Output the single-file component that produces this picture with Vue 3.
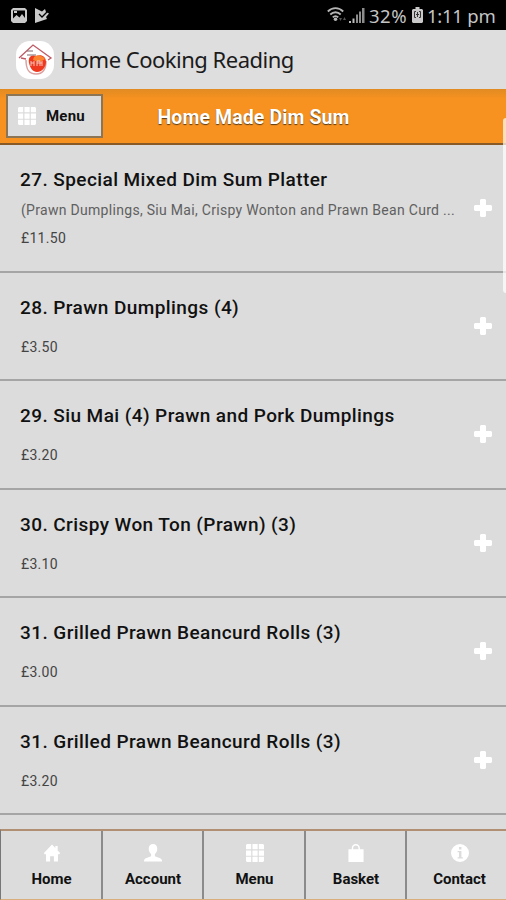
<script setup>
import { ref } from "vue";

const dishes = ref([
  {
    name: "27. Special Mixed Dim Sum Platter",
    info: "(Prawn Dumplings, Siu Mai, Crispy Wonton and Prawn Bean Curd ...",
    price: "£11.50",
  },
  { name: "28. Prawn Dumplings (4)", price: "£3.50" },
  { name: "29. Siu Mai (4) Prawn and Pork Dumplings", price: "£3.20" },
  { name: "30. Crispy Won Ton (Prawn) (3)", price: "£3.10" },
  { name: "31. Grilled Prawn Beancurd Rolls (3)", price: "£3.00" },
  { name: "31. Grilled Prawn Beancurd Rolls (3)", price: "£3.20" },
]);

const grid =
  "M1 0h4.500v5.500H0V1zM6.800 0h5.500v5.500H6.800zM13.500 0H18l1 1v4.500h-5.500zM0 6.800h5.500v5.500H0zM6.800 6.800h5.500v5.500H6.800zM13.500 6.800H19v5.500h-5.500zM0 13.500h5.500V19H1l-1-1zM6.800 13.500h5.500V19H6.800zM13.500 13.500H19V18l-1 1h-4.500z";

const tabs = [
  {
    label: "Home",
    icon: "M9.500.5 1 9.500l.7 1.300H3.200V18.500h4.300v-5.500h4v5.500h4.300v-7.700h1.500l.7-1.300-2.500-2.700V2h-2.500v2.200z",
  },
  {
    label: "Account",
    icon: "M9.500 0C6.800 0 5 2 5 5c0 2.500.9 4.300 2.500 5.500v2.500L2 15c-1.500.5-2 1.500-2 3.500h19c0-2-.5-3-2-3.500l-5.500-2v-2.500C13.100 9.300 14 7.500 14 5c0-3-1.800-5-4.500-5z",
  },
  { label: "Menu", icon: grid },
  {
    label: "Basket",
    icon: "M1.500 5.500H5V4.500C5 2 6.800 0 9.300 0s4.300 2 4.300 4.500v1h3.900V19h-16zM6.500 5.500h5.600v-1c0-1.800-1-3-2.800-3s-2.800 1.200-2.800 3z",
  },
  {
    label: "Contact",
    icon: "M9.500 0a9.500 9.500 0 1 1 0 19 9.500 9.500 0 0 1 0-19zM8.500 3.200v2.500h2.500V3.200zM7 7.500v1.200h1.500V14H7v1.300h5.500V14H11V7.500z",
  },
];
</script>

<template>
  <div class="app">
    <div class="status">
      <div class="notices">
        <svg width="16" height="15" viewBox="0 0 16 15">
          <path
            fill="#c9c9c9"
            fill-rule="evenodd"
            d="M2 0h12l2 2v11l-2 2H2l-2-2V2zM2 2.500v8L5.500 7l3 2.500L11 6l3 4V2.500z"
          />
          <path fill="#c9c9c9" d="M3 3h3v2H3z" />
        </svg>
        <svg width="15" height="15" viewBox="0 0 15 15">
          <path fill="#c9c9c9" d="M0 0l7 3.500L10 1l1 3 3 1.500-3 3.500 1 2-12 4z" />
          <path fill="none" stroke="#000" stroke-width="1.300" d="M4 6l3 3 5-5" />
        </svg>
      </div>
      <div class="system">
        <svg class="wifi" width="20" height="16" viewBox="0 0 20 16">
          <g fill="none" stroke="#b5b5b5" stroke-width="1.800">
            <path d="M.8 4.500c4.400-4.400 11-4.400 15.400 0M3.300 7.500c3-3 7.400-3 10.400 0M5.800 10.300c1.600-1.700 3.800-1.700 5.400 0" />
          </g>
          <circle cx="8.500" cy="12.300" r="1.800" fill="#b5b5b5" />
          <path fill="#555" d="M12 11h3l-1.500 3zM16 13h3l-1.500-3z" />
        </svg>
        <svg class="signal" width="16" height="15" viewBox="0 0 16 15">
          <path fill="#bcbcbc" d="M0 13h2v2H0zM3.500 10.500h2V15h-2z" />
          <path fill="#8c8c8c" d="M7 6.500h2V15H7zM10 3.500h2V15h-2zM13 0h2.500v15H13z" />
        </svg>
        <span class="percent">32%</span>
        <svg class="battery" width="11" height="16" viewBox="0 0 11 16">
          <path fill="#c9c9c9" d="M3.500 0h4v2H10l1 1v12l-1 1H1l-1-1V3l1-1h2.500z" />
          <path fill="none" stroke="#333" d="M4 4.500H2.500v6H4M7 4.500h1.500v6H7M5.500 5v5M4 7.500h3" />
        </svg>
        <span class="time">1:11 pm</span>
      </div>
    </div>

    <header class="brand">
      <svg class="logo" width="38" height="38" viewBox="0 0 38 38">
        <rect width="38" height="38" rx="14" fill="#fff" />
        <path
          d="M10 19c0 10 3 14 10 14s10-5 10-13"
          fill="none"
          stroke="#dca0a0"
          stroke-width="1.500"
        />
        <path
          d="M20 15c-5-2-8 1-7 7 1 5 4 9 8 9 5 0 9-5 9-10 0-6-5-8-10-6z"
          fill="#ef391f"
        />
        <path d="M18 16c4-3 9-1 11 2-3 3-8 3-12 1z" fill="#fa8430" />
        <path
          d="M15 20v5m0-3h3m0-2v5m3-5v5m0-5h3v5m2-5v5m-5-3h5"
          fill="none"
          stroke="#f5c6b9"
          stroke-width="1"
        />
        <path
          d="M3 17L17 4l18 13-3 2M5 17l5 1"
          fill="none"
          stroke="#bd5a65"
          stroke-width="1.300"
        />
        <path d="M11 10h6M11 14h9" stroke="#7f666b" stroke-width="1" />
      </svg>
      <h1>Home Cooking Reading</h1>
    </header>

    <div class="titlebar">
      <button class="menuBtn">
        <svg width="18" height="18" viewBox="0 0 19 19"><path fill="#fff" :d="grid" /></svg>
        <span>Menu</span>
      </button>
      <h2>Home Made Dim Sum</h2>
    </div>

    <main class="list">
      <div v-for="(dish, i) in dishes" :key="i" class="dish" :class="{ tall: dish.info }">
        <div class="text">
          <h3>{{ dish.name }}</h3>
          <p v-if="dish.info" class="info">{{ dish.info }}</p>
          <p class="price">{{ dish.price }}</p>
        </div>
        <svg class="plus" width="18" height="18" viewBox="0 0 18 18">
          <path
            fill="#fff"
            d="M7 0h4l1 1v5h5l1 1v4l-1 1h-5v5l-1 1H7l-1-1v-5H1l-1-1V7l1-1h5V1z"
          />
        </svg>
      </div>
    </main>

    <nav class="tabs">
      <div v-for="tab in tabs" :key="tab.label" class="tab">
        <svg width="18" height="18" viewBox="0 0 19 19">
          <path fill="#fff" fill-rule="evenodd" :d="tab.icon" />
        </svg>
        <span>{{ tab.label }}</span>
      </div>
    </nav>
    <div class="scrollbar"></div>
  </div>
</template>

<style>
body {
  margin: 0;
  background: #dcdcdc;
}
</style>

<style scoped>
.app {
  position: relative;
  display: flex;
  flex-direction: column;
  width: 506px;
  height: 900px;
  overflow: hidden;
  background: #dcdcdc;
  color: #111;
  font-family: Roboto, "Liberation Sans", sans-serif;
}

h1,
h2,
h3,
p {
  margin: 0;
  white-space: nowrap;
}

svg {
  display: block;
  flex: none;
}

.status {
  display: flex;
  justify-content: space-between;
  box-sizing: border-box;
  height: 30px;
  flex: none;
  padding: 0 11px;
  background: #000;
  color: #c4c4c4;
  font-family: "Noto Sans", sans-serif;
  font-size: 18.500px;
  white-space: nowrap;
}

.notices,
.system {
  display: flex;
  align-items: center;
}

.notices {
  gap: 8px;
}

.signal {
  margin-left: 2px;
}

.percent {
  margin-left: 4px;
  width: 39px;
  padding-top: 1px;
  letter-spacing: 0.5px;
}

.battery {
  margin-left: 4px;
}

.time {
  margin-left: 4px;
  width: 68px;
  padding-top: 1px;
  letter-spacing: -0.25px;
}

.brand {
  display: flex;
  align-items: center;
  box-sizing: border-box;
  flex: none;
  height: 59px;
  padding-left: 16px;
  gap: 6px;
  background: #dedede;
}

.brand h1 {
  padding-bottom: 1px;
  font-family: "Noto Sans", sans-serif;
  font-size: 22px;
  font-weight: 400;
  letter-spacing: -0.5px;
  color: #1b1b1b;
}

.titlebar {
  display: grid;
  grid-template-columns: 97px 1fr 97px;
  align-items: center;
  box-sizing: border-box;
  flex: none;
  height: 56px;
  padding: 0 5px 0 6px;
  background: linear-gradient(#e18b22, #f79220 10px);
  border-bottom: 2px solid #885a25;
}

.menuBtn {
  display: flex;
  align-items: center;
  box-sizing: border-box;
  height: 44px;
  padding: 0 0 0 10px;
  gap: 10px;
  background: #dcdcdc;
  border: 2px solid #8c7555;
  color: #111;
  font-family: inherit;
  font-size: 15px;
  font-weight: 700;
  letter-spacing: 0.2px;
}

.titlebar h2 {
  padding-top: 2px;
  text-align: center;
  color: #fff;
  font-size: 19.500px;
  font-weight: 700;
  letter-spacing: 0.1px;
  text-shadow: 0 1px 1px #5a3a14;
}

.list {
  flex: 1;
  min-height: 0;
  overflow: hidden;
}

.dish {
  display: flex;
  align-items: center;
  justify-content: space-between;
  box-sizing: border-box;
  height: 108.5px;
  padding: 0 14px 0 20px;
  border-bottom: 2px solid #a5a5a5;
}

.dish.tall {
  height: 127.5px;
}

.text {
  align-self: flex-start;
  padding-top: 23px;
}

.dish h3 {
  font-size: 19px;
  line-height: 24px;
  font-weight: 500;
  letter-spacing: 0.42px;
}

.info,
.price {
  padding-left: 1px;
  font-size: 14px;
  line-height: 20px;
  color: #444;
  letter-spacing: 0.3px;
}

.info {
  margin-top: 8px;
  color: #606060;
}

.price {
  margin-top: 17px;
}

.info + .price {
  margin-top: 8px;
}

.tabs {
  display: grid;
  grid-template-columns: 102px 101px 102px 101px 1fr;
  box-sizing: border-box;
  flex: none;
  height: 71px;
  border-top: 2px solid #b18f73;
  border-bottom: 1px solid #d9ae7b;
  border-left: 1px solid #777;
}

.tab {
  display: flex;
  flex-direction: column;
  align-items: center;
  padding-top: 13px;
  padding-left: 1px;
  gap: 7px;
  border-right: 2px solid #8b8b8b;
  font-size: 15px;
  font-weight: 700;
  line-height: 20px;
}

.tab:last-child {
  padding-left: 6px;
  border-right: 0;
}

.scrollbar {
  position: absolute;
  top: 118px;
  right: 0;
  width: 3px;
  height: 175px;
  background: rgba(255, 255, 255, 0.7);
  border-radius: 3px 0 0 3px;
}
</style>
